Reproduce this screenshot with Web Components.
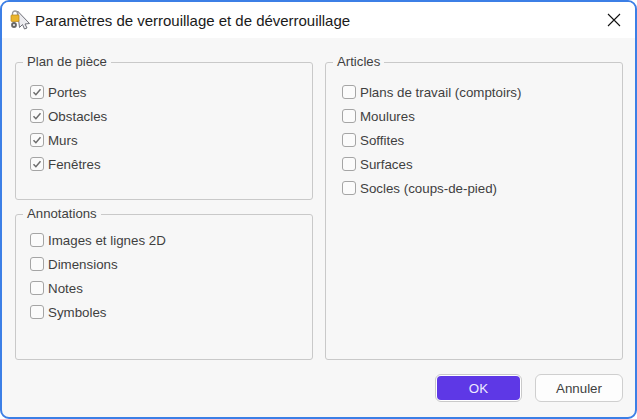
<!DOCTYPE html>
<html lang="fr"><head><meta charset="utf-8"><title>Paramètres</title>
<style>html,body{margin:0;padding:0;background:#fff}body{font-family:"Liberation Sans",sans-serif}</style>
</head><body>
<lock-dialog heading="Paramètres de verrouillage et de déverrouillage">
  <div style="display:grid;grid-template-columns:298px 298px;column-gap:12px;height:100%">
    <div style="display:grid;grid-template-rows:146px 154px;row-gap:6px">
      <check-group label="Plan de pièce">
        <check-row checked>Portes</check-row><check-row checked>Obstacles</check-row><check-row checked>Murs</check-row><check-row checked>Fenêtres</check-row>
      </check-group>
      <check-group label="Annotations" style="--top:6px">
        <check-row>Images et lignes 2D</check-row><check-row>Dimensions</check-row><check-row>Notes</check-row><check-row>Symboles</check-row>
      </check-group>
    </div>
    <check-group label="Articles" style="--indent:16px">
      <check-row>Plans de travail (comptoirs)</check-row><check-row>Moulures</check-row><check-row>Soffites</check-row><check-row>Surfaces</check-row><check-row>Socles (coups-de-pied)</check-row>
    </check-group>
  </div>
  <dialog-button slot="actions" primary>OK</dialog-button>
  <dialog-button slot="actions">Annuler</dialog-button>
</lock-dialog>
<script>
class LockDialog extends HTMLElement{constructor(){super();const s=this.attachShadow({mode:'open'});s.innerHTML=`<style>
:host{display:flex;flex-direction:column;box-sizing:border-box;width:637px;height:419px;border:2px solid #3c7fe6;border-radius:9px;background:#f7f7f7;overflow:hidden;color:#3f3f3f;font:13.33px "Liberation Sans",sans-serif}
header{flex:none;height:36px;background:#fff;display:flex;align-items:center;padding:0 7px 0 8px;box-sizing:border-box}
svg.logo{flex:none;width:22px;height:22px;margin-right:3px}
h1{flex:1;margin:0;font:400 15px "Liberation Sans",sans-serif;letter-spacing:-.02px;color:#1a1a1a;white-space:nowrap}
.x{flex:none;width:14px;height:14px;margin-right:7px}
main{flex:none;height:322px;padding:16px 12px 0 13px;box-sizing:border-box}
footer{flex:1;display:flex;justify-content:flex-end;align-items:flex-start;gap:13px;padding:14px 12px 0 0}
</style>
<header>
<svg class="logo" viewBox="0 0 22 22"><path d="M7.500 2L19.500 14.500L15 15L17 19L14.500 20L12.500 15.500L9.500 18.500z" fill="#ececf0" stroke="#6f7078" stroke-width="1"/><path d="M2.500 6V4.500a2.500 2.500 0 0 1 5 0V6" fill="none" stroke="#9a9a9a" stroke-width="1.300"/><rect x="1" y="6" width="8" height="6.500" rx=".8" fill="#eab52c" stroke="#b98516" stroke-width=".7"/><circle cx="4" cy="16" r="2.900" fill="#666"/><circle cx="4" cy="16" r="1.100" fill="#eee"/></svg>
<h1></h1>
<svg class="x" viewBox="0 0 14 14"><path d="M1 1l12 12M13 1L1 13" stroke="#111" stroke-width="1.100" fill="none"/></svg>
</header>
<main><slot></slot></main>
<footer><slot name="actions"></slot></footer>`;s.querySelector('h1').textContent=this.getAttribute('heading')}}
class CheckGroup extends HTMLElement{constructor(){super();const s=this.attachShadow({mode:'open'});s.innerHTML=`<style>
:host{display:block;min-height:0}
fieldset{box-sizing:border-box;height:100%;margin:0;padding:0;border:1px solid #c9c9c9;border-radius:3px}
legend{margin-left:7px;padding:0 4px;font-size:13.2px;line-height:16px;color:#3f3f3f}
.rows{display:flex;flex-direction:column;padding:var(--top,10px) 0 0 var(--indent,14px)}
</style><fieldset><legend></legend><div class="rows"><slot></slot></div></fieldset>`;s.querySelector('legend').textContent=this.getAttribute('label')}}
class CheckRow extends HTMLElement{constructor(){super();const s=this.attachShadow({mode:'open'});const c=this.hasAttribute('checked');s.innerHTML=`<style>
:host{display:flex;align-items:center;height:24px;gap:4px;white-space:nowrap;color:#3f3f3f}
.b{flex:none;width:14px;height:14px;box-sizing:border-box;border:1px solid #a5a5a5;border-radius:3px;background:#fbfbfb;display:block}
</style><svg class="b" viewBox="0 0 12 12">${c?'<path d="M2.500 6.200l2.400 2.500 4.600-5.400" fill="none" stroke="#6e6e6e" stroke-width="1.500"/>':''}</svg><span><slot></slot></span>`}}
class DialogButton extends HTMLElement{constructor(){super();const s=this.attachShadow({mode:'open'});const p=this.hasAttribute('primary');s.innerHTML=`<style>
:host{display:block}
.ring{box-sizing:border-box;width:87px;height:28px;padding:1px;border:1px solid #c9c9c9;border-radius:6px;background:#fff}
button{display:block;box-sizing:border-box;font:13.33px "Liberation Sans",sans-serif;padding:0}
.p{width:83px;height:24px;background:#5e38e6;color:#efeaff;border:0;border-radius:4px}
.s{width:88px;height:28px;border-radius:6px;background:#fdfdfd;color:#3f3f3f;border:1px solid #cfcfcf}
</style>${p?'<div class="ring"><button class="p"><slot></slot></button></div>':'<button class="s"><slot></slot></button>'}`}}
customElements.define('lock-dialog',LockDialog);customElements.define('check-group',CheckGroup);customElements.define('check-row',CheckRow);customElements.define('dialog-button',DialogButton);
</script>
</body></html>
